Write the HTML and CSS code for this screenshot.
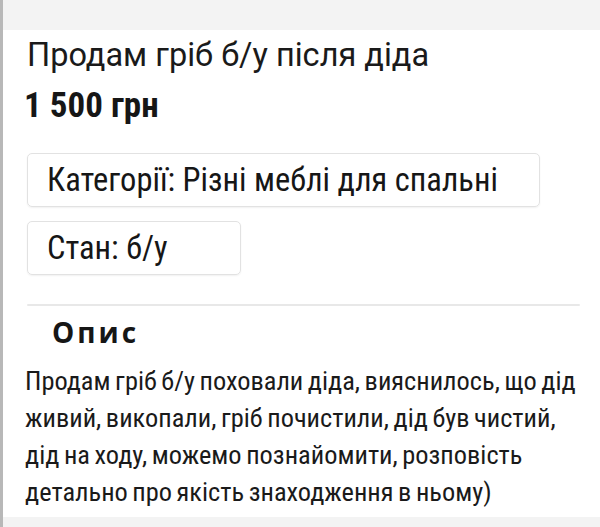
FILE: index.html
```html
<!DOCTYPE html>
<html lang="uk">
<head>
  <meta charset="UTF-8">
  <meta name="viewport" content="width=device-width, initial-scale=1.0">
  <title>Продам гріб б/у</title>
  <link rel="stylesheet" href="styles.css">
</head>
<body>
  <div class="page">
    <!-- top strip -->
    <div class="top-strip"></div>

    <div class="ad">
      <h1 class="ad-title">Продам гріб б/у після діда</h1>
      <div class="ad-price">1 500 грн</div>

      <div class="tag tag-wide">Категорії: Різні меблі для спальні</div>
      <div class="tag tag-small">Стан: б/у</div>

      <hr class="divider">

      <h2 class="section-title">Опис</h2>
      <p class="description">
        Продам гріб б/у поховали діда, вияснилось, що дід<br>
        живий, викопали, гріб почистили, дід був чистий,<br>
        дід на ходу, можемо познайомити, розповість<br>
        детально про якість знаходження в ньому)
      </p>
    </div>

    <!-- bottom strip -->
    <div class="bottom-strip"></div>
  </div>
</body>
</html>
```

FILE: styles.css
```css
/* Basic Page Styling */
body, html {
  margin: 0;
  padding: 0;
  background: #ffffff;
  color: #161616;
  font-family: Roboto, "Noto Sans", sans-serif;
}
.page {
  height: 527px;
  border-left: 3px solid #b8b8b8;
  display: flex;
  flex-direction: column;
  overflow: hidden;
}
.top-strip {
  height: 30px;
  background: #f3f3f3;
  flex-shrink: 0;
}
.bottom-strip {
  flex: 1;
  background: #f3f3f3;
}
.ad {
  padding: 6px 20px 0 24px;
  height: 487px;
  box-sizing: border-box;
}

/* Title and price */
.ad-title {
  margin: 0;
  font-size: 32.5px;
  line-height: 38px;
  font-weight: 400;
  color: #1a1a1a;
  white-space: nowrap;
}
.ad-price {
  margin-top: 12px;
  margin-left: -3px;
  font-size: 35px;
  line-height: 40px;
  font-weight: 700;
  font-stretch: 77%;
}

/* Tag boxes */
.tag {
  height: 54px;
  box-sizing: border-box;
  border: 1px solid #e2e2e2;
  border-radius: 5px;
  box-shadow: 0 1px 2px rgba(0, 0, 0, 0.06);
  display: flex;
  align-items: center;
  padding-left: 19px;
  font-size: 32.5px;
  font-stretch: 87%;
  white-space: nowrap;
}
.tag-wide {
  margin-top: 27px;
  width: 513px;
}
.tag-small {
  margin-top: 14px;
  width: 214px;
}

/* Description */
.divider {
  margin: 29px 0 0 0;
  height: 2px;
  border: none;
  border-radius: 1px;
  background: #e8e8e8;
  width: 553px;
}
.section-title {
  margin: 10px 0 0 25px;
  font-family: "Open Sans", sans-serif;
  font-size: 28px;
  line-height: 32px;
  font-weight: 700;
  letter-spacing: 3px;
}
.description {
  margin: 15px 0 0 -2px;
  font-size: 26.4px;
  line-height: 37px;
  font-stretch: 87%;
  word-spacing: -1.5px;
  color: #1a1a1a;
  white-space: nowrap;
}
```
